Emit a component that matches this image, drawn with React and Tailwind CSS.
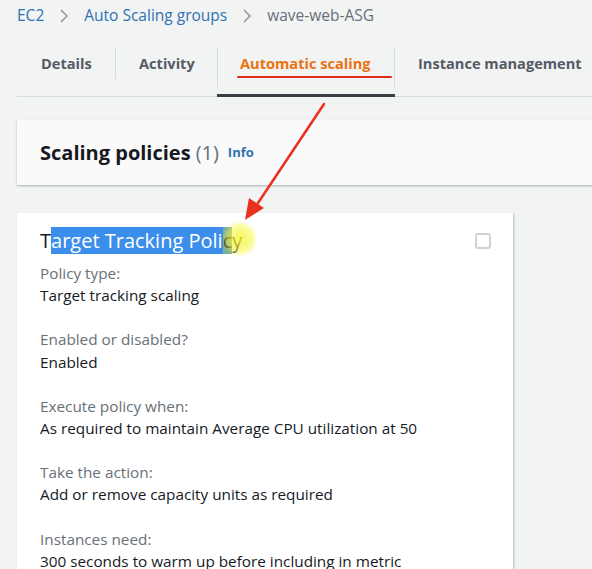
const fields = [
    { label: "Policy type:", value: "Target tracking scaling" },
    { label: "Enabled or disabled?", value: "Enabled" },
    { label: "Execute policy when:", value: "As required to maintain Average CPU utilization at 50" },
    { label: "Take the action:", value: "Add or remove capacity units as required" },
    { label: "Instances need:", value: "300 seconds to warm up before including in metric" },
];

function Chevron() {
    return (
        <svg width="10" height="16" viewBox="0 0 10 16" className="mx-[15px]">
            <path d="M2 2 L8 8 L2 14" fill="none" stroke="#8d9096" strokeWidth="1.4" />
        </svg>
    );
}

export default function App() {
    return (
        <div
            className="relative w-[592px] h-[569px] overflow-hidden bg-[#f2f3f3] text-[#16191f]"
            style={{ fontFamily: '"Open Sans", "Noto Sans", sans-serif' }}
        >
            {/* breadcrumb */}
            <div className="flex items-center h-[31px] pl-[17px] text-[15.5px]">
                <span className="text-[#2f72b0]">EC2</span>
                <Chevron />
                <span className="text-[#2f72b0]">Auto Scaling groups</span>
                <Chevron />
                <span className="text-[#687078]">wave-web-ASG</span>
            </div>

            {/* tabs */}
            <div className="ml-[17px] mt-[9px] flex h-[57px] pb-[9px] border-b border-[#d5dbdb] text-[14.6px] font-bold text-[#545b64]">
                <div className="w-[98px] flex items-center pl-[24px]">Details</div>
                <div className="w-[102px] flex items-center pl-[23px] border-l border-[#d5dbdb] my-[8px]">Activity</div>
                <div className="w-[178px] relative flex items-center pl-[23px] text-[#ec7211]">
                    <span className="absolute left-0 top-[8px] bottom-[0px] border-l border-[#d5dbdb]" />
                    <span className="relative whitespace-nowrap">
                        Automatic scaling
                        <span className="absolute left-[-3px] right-[-21px] bottom-[-4px] h-[2px] bg-[#e02b1c] rounded" />
                    </span>
                    <span className="absolute left-0 right-0 bottom-[-10px] h-[3px] bg-[#3b3f45]" />
                    <span className="absolute right-0 top-[8px] bottom-[0px] border-r border-[#d5dbdb]" />
                </div>
                <div className="flex items-center pl-[23px] whitespace-nowrap">Instance management</div>
            </div>

            {/* scaling policies header */}
            <div className="ml-[17px] mt-[23px] h-[65px] bg-[#fafafa] shadow-[0_1px_2px_rgba(0,28,36,0.3)] flex items-center pl-[23px]">
                <span className="text-[20px] font-bold">Scaling policies</span>
                <span className="text-[20px] text-[#687078] ml-[5px]">(1)</span>
                <span className="text-[13px] font-bold text-[#2f72b0] ml-[9px]">Info</span>
            </div>

            {/* policy card */}
            <div className="ml-[17px] mt-[28px] w-[496px] bg-white shadow-[1px_1px_2px_rgba(0,28,36,0.25)] pl-[23px] pr-[22px] pt-[15px] pb-[40px]">
                <div className="flex items-center justify-between h-[26px]">
                    <span className="text-[20px] leading-[26px]">
                        T
                        <span className="bg-[#3b8eea] text-white">arget Tracking Poli</span>
                        <span className="bg-[#7fae9a] text-[#2b3a2a]">c</span>
                        y
                    </span>
                    <span className="w-[16px] h-[16px] border-2 border-[#cfd2d4] rounded-[3px]" />
                </div>
                <div className="mt-[8px] flex flex-col gap-[22px] text-[15.3px] leading-[22.2px]">
                    {fields.map((f) => (
                        <div key={f.label}>
                            <p className="text-[#687078]">{f.label}</p>
                            <p className="text-[#16191f]">{f.value}</p>
                        </div>
                    ))}
                </div>
            </div>

            {/* annotation overlay */}
            <svg className="absolute inset-0 pointer-events-none" width="592" height="569">
                <defs>
                    <radialGradient id="hl">
                        <stop offset="0%" stopColor="#f6f63a" stopOpacity="0.85" />
                        <stop offset="70%" stopColor="#f6f63a" stopOpacity="0.5" />
                        <stop offset="100%" stopColor="#f6f63a" stopOpacity="0" />
                    </radialGradient>
                </defs>
                <circle cx="240" cy="239" r="18" fill="url(#hl)" />
                <line x1="324" y1="104" x2="258" y2="203" stroke="#e8321f" strokeWidth="2.5" strokeLinecap="round" />
                <polygon points="245,220 249,198 264,208" fill="#e8321f" />
            </svg>
        </div>
    );
}
